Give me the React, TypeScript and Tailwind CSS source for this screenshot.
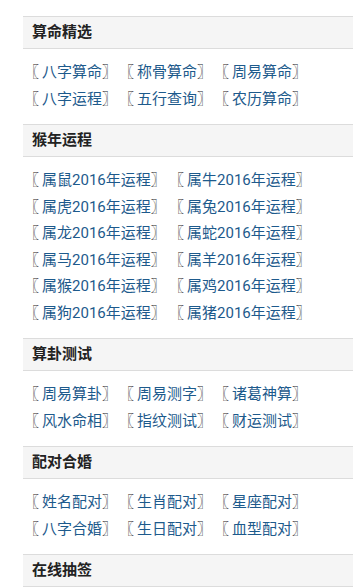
import React from 'react'

type Section = {
  title: string
  links: string[]
  wide?: boolean
}

const sections: Section[] = [
  { title: '算命精选', links: ['八字算命', '称骨算命', '周易算命', '八字运程', '五行查询', '农历算命'] },
  {
    title: '猴年运程',
    wide: true,
    links: ['鼠', '牛', '虎', '兔', '龙', '蛇', '马', '羊', '猴', '鸡', '狗', '猪'].map((z) => `属${z}2016年运程`),
  },
  { title: '算卦测试', links: ['周易算卦', '周易测字', '诸葛神算', '风水命相', '指纹测试', '财运测试'] },
  { title: '配对合婚', links: ['姓名配对', '生肖配对', '星座配对', '八字合婚', '生日配对', '血型配对'] },
  { title: '在线抽签', links: [] },
]

function LinkItem({ text }: { text: string }) {
  return (
    <span className="whitespace-nowrap">
      <span className="text-[#1a1a1a] mr-[3px]">〖</span>
      <a href="#" className="text-[#1d5a8c]">
        {text}
      </a>
      <span className="text-[#1a1a1a]">〗</span>
    </span>
  )
}

export default function App() {
  return (
    <div
      className="min-h-[587px] bg-white pt-[16px] pl-[23px]"
      style={{ fontFamily: 'Roboto, "Noto Sans CJK SC", sans-serif' }}
    >
      {sections.map((s) => (
        <div key={s.title}>
          <div className="h-[33px] border-y border-[#dcdcdc] bg-[#f5f5f5] pl-[9px] flex items-center">
            <h3 className="text-[15px] font-bold text-[#222]">{s.title}</h3>
          </div>
          {s.links.length > 0 && (
            <div className="pt-[10px] pb-[12px] pl-[1px] text-[15px] leading-[26.5px]">
              <div className={s.wide ? 'grid grid-cols-[145px_145px]' : 'grid grid-cols-[95px_95px_95px]'}>
                {s.links.map((l) => (
                  <LinkItem key={l} text={l} />
                ))}
              </div>
            </div>
          )}
        </div>
      ))}
    </div>
  )
}
